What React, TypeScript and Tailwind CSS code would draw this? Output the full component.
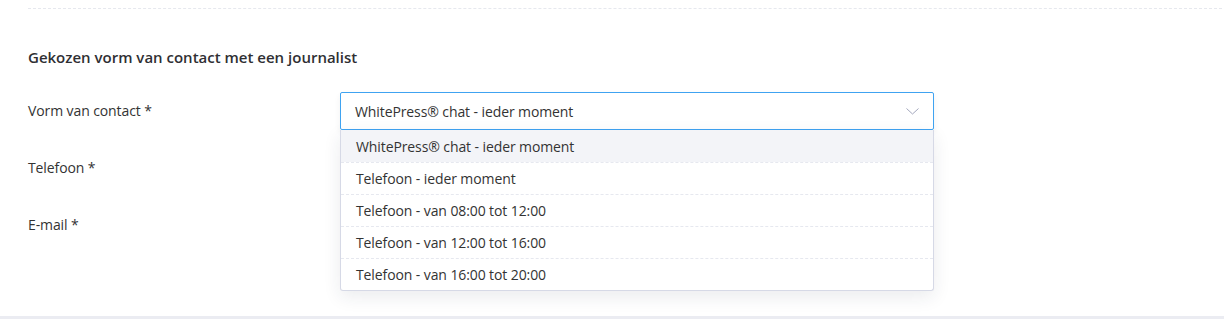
import { useState } from 'react';

const OPTIONS = [
  'WhitePress® chat - ieder moment',
  'Telefoon - ieder moment',
  'Telefoon - van 08:00 tot 12:00',
  'Telefoon - van 12:00 tot 16:00',
  'Telefoon - van 16:00 tot 20:00',
];

function Chevron() {
  return (
    <svg width="13" height="7" viewBox="0 0 13 7" fill="none" className="text-[#a3a7bd]">
      <path d="M0.5 0.5 L6.5 6 L12.5 0.5" stroke="currentColor" strokeWidth="1" />
    </svg>
  );
}

export default function App() {
  const [value, setValue] = useState(OPTIONS[0]);
  const [open, setOpen] = useState(true);

  return (
    <div className="h-[319px] w-full bg-white flex flex-col font-['Open_Sans',sans-serif] text-[14px] tracking-[-0.1px] text-[#333]">
      <div className="flex-1 pl-[28px] pr-[2px] pt-[8px]">
        <div className="border-t border-dashed border-[#e6e8ee]" />

        {/* Section heading */}
        <h2 className="mt-[38px] font-semibold text-[15px] tracking-normal leading-5 text-[#2f2f33]">
          Gekozen vorm van contact met een journalist
        </h2>

        <div className="mt-[25px] flex flex-col gap-[20px]">
          {/* Vorm van contact */}
          <div className="flex items-start h-[37px]">
            <label className="w-[312px] shrink-0 self-center">Vorm van contact *</label>
            <div className="relative w-[594px]">
              <button
                onClick={() => setOpen(!open)}
                className="w-full h-[38px] flex items-center justify-between pl-[14px] pr-[14px] border border-[#3fa3f1] rounded-[2px] bg-white shadow-[0_3px_6px_rgba(0,0,0,0.06)] text-left"
              >
                <span>{value}</span>
                <Chevron />
              </button>
              {open && (
                <ul className="absolute left-0 top-[38px] w-full bg-white border border-t-0 border-[#d6d9e6] rounded-b-[3px] shadow-[0_6px_18px_rgba(30,40,70,0.09)] z-10">
                  {OPTIONS.map((opt, i) => (
                    <li
                      key={opt}
                      onClick={() => {
                        setValue(opt);
                        setOpen(false);
                      }}
                      className={`h-[32px] flex items-center pl-[15px] cursor-pointer ${
                        i > 0 ? 'border-t border-dashed border-[#e6e8ef]' : ''
                      } ${opt === value ? 'bg-[#f3f4f8]' : ''}`}
                    >
                      {opt}
                    </li>
                  ))}
                </ul>
              )}
            </div>
          </div>

          {/* Telefoon */}
          <div className="flex items-center h-[37px]">
            <label className="w-[312px] shrink-0">Telefoon *</label>
          </div>

          {/* E-mail */}
          <div className="flex items-center h-[37px]">
            <label className="w-[312px] shrink-0">E-mail *</label>
          </div>
        </div>
      </div>
      <div className="h-[3px] bg-[#ebecf2]" />
    </div>
  );
}
